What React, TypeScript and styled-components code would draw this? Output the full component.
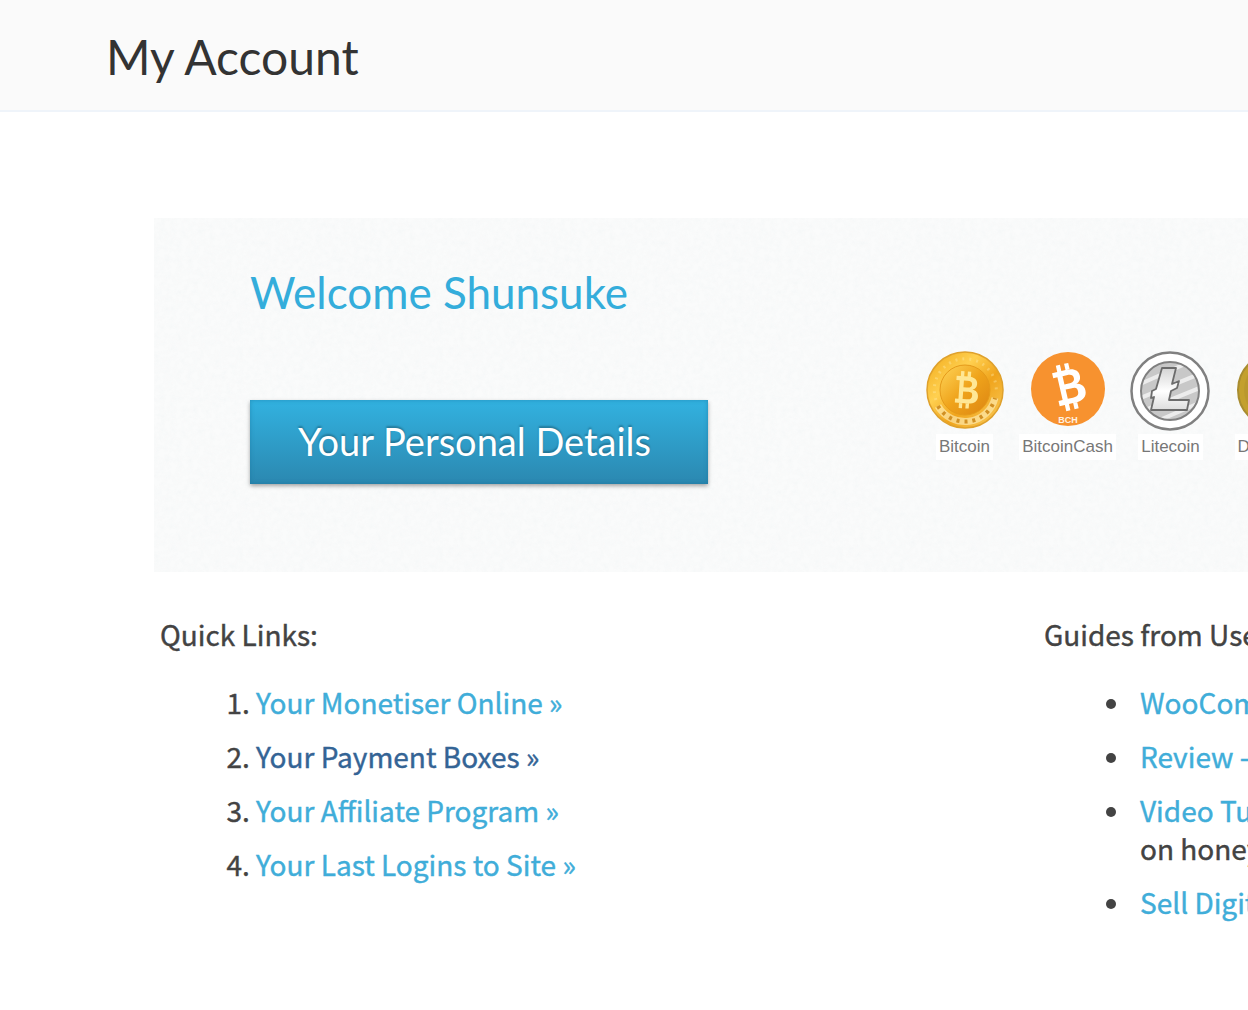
import React from "react";
import styled, { createGlobalStyle } from "styled-components";

const display = `Lato, "Open Sans", sans-serif`;
const text = `"Noto Sans CJK SC", "Noto Sans CJK JP", "Open Sans", sans-serif`;

const paper = `url("data:image/svg+xml,%3Csvg xmlns='http://www.w3.org/2000/svg' width='200' height='200'%3E%3Cfilter id='n'%3E%3CfeTurbulence type='fractalNoise' baseFrequency='0.18' numOctaves='3' stitchTiles='stitch'/%3E%3CfeColorMatrix values='0 0 0 0 0.84 0 0 0 0 0.87 0 0 0 0 0.88 0 0 0 1.2 -0.42'/%3E%3C/filter%3E%3Crect width='200' height='200' filter='url(%23n)' opacity='.45'/%3E%3C/svg%3E")`;

const GlobalStyle = createGlobalStyle`
  * { box-sizing: border-box; }
  body {
    margin: 0;
    background: #fff;
    color: #434343;
    font-family: ${text};
    font-size: 28px;
    line-height: 38px;
    overflow-x: hidden;
  }
`;

const TitleBar = styled.header`
  padding: 29px 106px 25px;
  background: #fafafa;
  border-bottom: 2px solid #eff4fa;
`;

const PageTitle = styled.h1`
  margin: 0;
  font: 400 48px/56px ${display};
  color: #333;
`;

const Content = styled.main`
  padding: 106px 0 92px 154px;
  overflow: hidden;
`;

const Banner = styled.section`
  display: flex;
  align-items: flex-start;
  padding: 46px 0 88px 96px;
  background: #fafbfb ${paper};
`;

const Greeting = styled.div`
  flex: none;
  width: 663px;
`;

const Welcome = styled.h2`
  margin: 0 0 80px;
  font: 400 44px/56px ${display};
  color: #34addb;
`;

const DetailsButton = styled.button`
  display: block;
  padding: 13px 57px 15px 48px;
  border: 0;
  background: linear-gradient(#32b2e0, #2b88b0);
  box-shadow: 0 2px 4px rgba(0, 0, 0, 0.35), inset 0 0 4px rgba(20, 110, 150, 0.5);
  color: #fff;
  font: 400 38px/56px ${display};
  text-shadow: 0 -2px 2px rgba(0, 0, 0, 0.25);
  cursor: pointer;
`;

const Coins = styled.div`
  display: flex;
  flex: none;
  padding-top: 86px;
`;

const Coin = styled.figure`
  display: flex;
  flex-direction: column;
  align-items: center;
  gap: 2px;
  width: 103px;
  margin: 0;
  svg { display: block; }
`;

const CoinName = styled.figcaption`
  padding: 0 3px;
  background: #fff;
  color: #777;
  font: 400 17px/26px "Liberation Sans", sans-serif;
`;

const Columns = styled.div`
  display: grid;
  grid-template-columns: 884px 884px;
  padding: 43px 0 0 6px;
  -webkit-text-stroke: 0.4px currentColor;
`;

const ColumnTitle = styled.h3`
  margin: 0 0 30px;
  font: inherit;
`;

const Item = styled.li`
  margin-bottom: 16px;
`;

const Numbered = styled.ol`
  margin: 0;
  padding-left: 96px;
`;

const Bulleted = styled.ul`
  margin: 0;
  padding-left: 96px;
  list-style: none;

  li::before {
    content: "";
    display: inline-block;
    width: 10px;
    height: 10px;
    margin: 0 24px 4px -34px;
    border-radius: 50%;
    background: #434343;
    vertical-align: middle;
  }
`;

const Link = styled.a<{ $visited?: boolean }>`
  color: ${(p) => (p.$visited ? "#346495" : "#40add9")};
  text-decoration: none;
`;

const bSign = "M-11-15H3c7 0 11 3 11 8 0 4-2 6-5 7 4 1 7 3 7 8 0 6-5 9-12 9h-15v-5h4V-10h-4ZM-2-10v8h4c4 0 6-1 6-4s-2-4-6-4ZM-2 3v9h5c4 0 6-1 6-5s-2-4-6-4ZM-6-21h4v6h-4ZM2-21h4v6H2ZM-6 17h4v6h-4ZM2 17h4v6H2Z";

const BitcoinIcon = () => (
  <svg width="80" height="82" viewBox="-40 -40 80 82" aria-hidden="true">
    <defs>
      <linearGradient id="gold" x1="0" y1="0" x2="1" y2="1">
        <stop offset="0" stopColor="#f0a818" />
        <stop offset=".35" stopColor="#ffd050" />
        <stop offset=".6" stopColor="#f0a41c" />
        <stop offset="1" stopColor="#fbd060" />
      </linearGradient>
      <linearGradient id="goldCore" x1="0" y1="0" x2="1" y2="1">
        <stop offset="0" stopColor="#ffd65a" />
        <stop offset=".5" stopColor="#efa31b" />
        <stop offset="1" stopColor="#dc8512" />
      </linearGradient>
    </defs>
    <circle r="38" fill="url(#gold)" stroke="#dfa12c" strokeWidth="1.5" />
    <path d="M-29 10A31 31 0 1 1 31 4" fill="none" stroke="#fff0b4" strokeWidth="3" strokeDasharray="2 5" opacity=".35" />
    <path d="M-27 16A31 31 0 0 0 30 8" fill="none" stroke="#fff2c0" strokeWidth="7" opacity=".6" />
    <path d="M-27 16A31 31 0 0 0 30 8" fill="none" stroke="#c98312" strokeWidth="4" strokeDasharray="3 5" opacity=".85" />
    <circle r="25" fill="url(#goldCore)" stroke="#e59a1a" strokeWidth="1" />
    <path d={bSign} transform="translate(0 -1) rotate(4) scale(.84)" fill="#ffe795" fillRule="evenodd" />
  </svg>
);

const BitcoinCashIcon = () => (
  <svg width="80" height="82" viewBox="-40 -39 80 82" aria-hidden="true">
    <circle r="37" fill="#f7922f" />
    <path d={bSign} transform="translate(-1 -3) rotate(-13) scale(1.06)" fill="#fff" fillRule="evenodd" />
    <text y="34" textAnchor="middle" fill="#fff0e0" fontFamily="Liberation Sans, sans-serif" fontWeight="700" fontSize="9">BCH</text>
  </svg>
);

const LitecoinIcon = () => (
  <svg width="82" height="82" viewBox="-40 -41 82 82" aria-hidden="true">
    <defs>
      <clipPath id="disc"><circle r="29" /></clipPath>
      <linearGradient id="silver" x1="0" y1="0" x2="0" y2="1">
        <stop offset="0" stopColor="#d4d4d4" />
        <stop offset=".55" stopColor="#fff" />
        <stop offset="1" stopColor="#ddd" />
      </linearGradient>
    </defs>
    <circle r="38.5" fill="#fff" stroke="#808080" strokeWidth="2.5" />
    <circle r="29" fill="#c8c8c8" />
    <g clipPath="url(#disc)" stroke="#ececec" strokeWidth="4">
      <path d="M-32-6 22-30M-32 8 32-18M-32 22 32-4M-22 34 34 10" />
    </g>
    <circle r="29" fill="none" stroke="#808080" strokeWidth="2" />
    <path d="M-8-23H6L2-7l7-3-2 7-6 3-2 9h20l-2 10h-36l3-13-3 1 1-7 4-2Z" fill="url(#silver)" stroke="#6c6c6c" strokeWidth="1.8" strokeLinejoin="round" />
  </svg>
);

const DogecoinIcon = () => (
  <svg width="80" height="82" viewBox="-41 -40 80 82" aria-hidden="true">
    <circle r="37" fill="#c3a02e" stroke="#a88c30" strokeWidth="2" />
    <circle r="31" fill="#ba982e" />
  </svg>
);

const coins = [
  { name: "Bitcoin", Icon: BitcoinIcon },
  { name: "BitcoinCash", Icon: BitcoinCashIcon },
  { name: "Litecoin", Icon: LitecoinIcon },
  { name: "Dogecoin", Icon: DogecoinIcon },
];

const quickLinks = [
  { label: "Your Monetiser Online »" },
  { label: "Your Payment Boxes »", visited: true },
  { label: "Your Affiliate Program »" },
  { label: "Your Last Logins to Site »" },
];

const guides = [
  { label: "WooCommerce" },
  { label: "Review -" },
  { label: "Video Tutorial", note: "on honey" },
  { label: "Sell Digital" },
];

export default function App() {
  return (
    <>
      <GlobalStyle />
      <TitleBar>
        <PageTitle>My Account</PageTitle>
      </TitleBar>
      <Content>
        <Banner>
          <Greeting>
            <Welcome>Welcome Shunsuke</Welcome>
            <DetailsButton type="button">Your Personal Details</DetailsButton>
          </Greeting>
          <Coins>
            {coins.map(({ name, Icon }) => (
              <Coin key={name}>
                <Icon />
                <CoinName>{name}</CoinName>
              </Coin>
            ))}
          </Coins>
        </Banner>
        <Columns>
          <section>
            <ColumnTitle>Quick Links:</ColumnTitle>
            <Numbered>
              {quickLinks.map(({ label, visited }) => (
                <Item key={label}>
                  <Link href="#" $visited={visited}>{label}</Link>
                </Item>
              ))}
            </Numbered>
          </section>
          <section>
            <ColumnTitle>Guides from Users:</ColumnTitle>
            <Bulleted>
              {guides.map(({ label, note }) => (
                <Item key={label}>
                  <Link href="#">{label}</Link>
                  {note && <><br />{note}</>}
                </Item>
              ))}
            </Bulleted>
          </section>
        </Columns>
      </Content>
    </>
  );
}
